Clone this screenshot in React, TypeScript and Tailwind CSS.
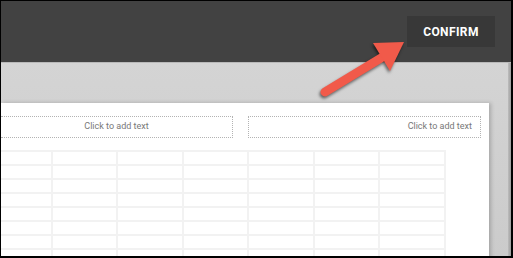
import React from "react";

const rows = Array.from({ length: 9 });
const cols = Array.from({ length: 7 });

export default function App() {
  return (
    <div className="relative w-[513px] h-[258px] overflow-hidden bg-black pt-px pl-px pr-[2px] pb-[2px] font-['Roboto',sans-serif]">
      <div className="flex flex-col w-full h-full overflow-hidden">
        {/* top bar */}
        <div className="h-[61px] shrink-0 bg-[#424242] flex justify-end items-start pt-[15px] pr-[16px]">
          <button className="w-[88px] h-[31px] bg-[#383838] text-white text-[12px] font-bold tracking-[0.4px]">
            CONFIRM
          </button>
        </div>

        {/* canvas */}
        <div className="flex-1 flex border-t border-[#b9b9b9] bg-gradient-to-b from-[#d4d4d4] to-[#cacaca]">
          <div className="w-[488px] shrink-0 mt-[40px] bg-white shadow-[2px_0_4px_rgba(0,0,0,0.2)] flex flex-col">
            <div className="flex items-center pt-[13px] gap-[15px]">
              <div className="w-[232px] h-[22px] border-y border-r border-dotted border-[#b3b3b3] flex items-center justify-center text-[9px] text-[#787878]">
                Click to add text
              </div>
              <div className="w-[233px] h-[22px] border border-dotted border-[#b3b3b3] flex items-center justify-end pr-[8px] text-[9px] text-[#787878]">
                Click to add text
              </div>
            </div>
            <div className="mt-[12px] -ml-[16px] w-fit grid grid-cols-[repeat(7,63.5px)] auto-rows-[12px] gap-[2px] p-[2px] bg-[#f2f2f2]">
              {rows.map((_, r) =>
                cols.map((_, c) => <div key={`${r}-${c}`} className="bg-white" />)
              )}
            </div>
          </div>
          <div className="flex-1" />
          <div className="w-[3px] bg-gradient-to-r from-[#bdbdbd] to-[#9e9e9e]" />
        </div>
      </div>

      {/* arrow annotation */}
      <svg
        className="absolute left-0 top-0 pointer-events-none"
        width="513"
        height="258"
        style={{ filter: "drop-shadow(-1px 2px 1.5px rgba(0,0,0,0.55))" }}
      >
        <line x1="325" y1="92" x2="386" y2="55" stroke="#f15a4a" strokeWidth="9" strokeLinecap="round" />
        <polygon points="404,42 373,43 390,71" fill="#f15a4a" />
      </svg>
    </div>
  );
}
